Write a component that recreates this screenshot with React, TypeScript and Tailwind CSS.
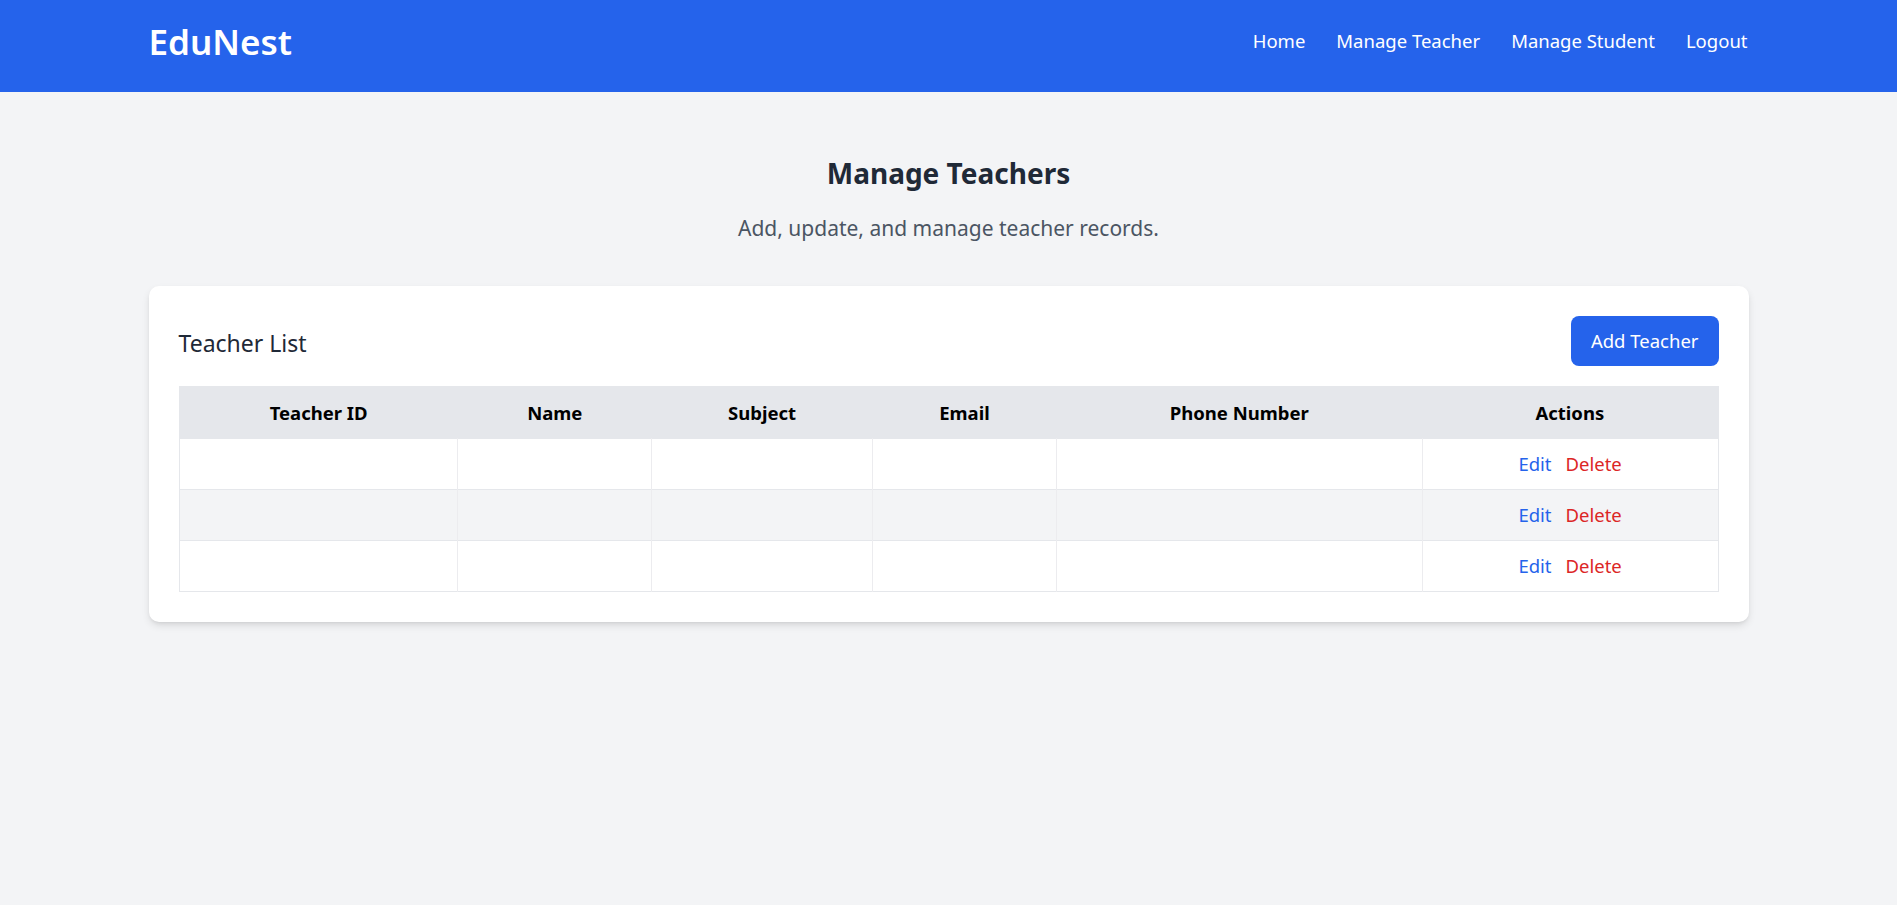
import React from "react";

const columns = [
  { label: "Teacher ID", w: "w-[279px]" },
  { label: "Name", w: "w-[194px]" },
  { label: "Subject", w: "w-[221px]" },
  { label: "Email", w: "w-[184px]" },
  { label: "Phone Number", w: "w-[366px]" },
  { label: "Actions", w: "w-[296px]" },
];

const rows = [1, 2, 3];

const App: React.FC = () => {
  return (
    <div className="min-h-screen bg-[#f3f4f6] font-['Noto_Sans',sans-serif]">
      <nav className="bg-[#2563eb]">
        <div className="mx-auto flex h-[92px] w-full max-w-[1600px] items-center justify-between pb-[10px] pr-[1px]">
          <h1 className="text-[35px] leading-[45px] font-semibold text-white">EduNest</h1>
          <ul className="flex items-center gap-[31px] text-[18.5px] text-white">
            <li><a href="#">Home</a></li>
            <li><a href="#">Manage Teacher</a></li>
            <li><a href="#">Manage Student</a></li>
            <li><a href="#">Logout</a></li>
          </ul>
        </div>
      </nav>

      <main className="mx-auto w-full max-w-[1600px] pt-[61px]">
        <div className="text-center">
          <h2 className="text-[28px] leading-[40px] font-bold text-[#1f2937]">Manage Teachers</h2>
          <p className="mt-[18px] text-[21px] leading-[35px] text-[#4b5563]">
            Add, update, and manage teacher records.
          </p>
        </div>

        <div className="mt-[40px] rounded-[10px] bg-white p-[30px] shadow-[0_4px_8px_-1px_rgba(0,0,0,0.12),0_2px_4px_-2px_rgba(0,0,0,0.1)]">
          <div className="mb-[20px] flex items-center justify-between">
            <h3 className="pt-[4px] text-[23px] leading-[32px] text-[#1f2937]">Teacher List</h3>
            <button className="h-[50px] rounded-[8px] bg-[#2563eb] px-[20px] text-[18.5px] text-white">
              Add Teacher
            </button>
          </div>

          <table className="w-full border-collapse border border-[#e5e7eb]">
            <thead>
              <tr className="bg-[#e5e7eb]">
                {columns.map((c) => (
                  <th key={c.label} className={`${c.w} h-[52px] text-center text-[18.5px] font-bold text-black`}>
                    {c.label}
                  </th>
                ))}
              </tr>
            </thead>
            <tbody>
              {rows.map((r) => (
                <tr key={r} className={`border-t border-[#e5e7eb] ${r === 2 ? "bg-[#f3f4f6]" : "bg-white"}`}>
                  <td className="h-[51px] border-r border-[#ececef]"></td>
                  <td className="h-[51px] border-r border-[#ececef]"></td>
                  <td className="h-[51px] border-r border-[#ececef]"></td>
                  <td className="h-[51px] border-r border-[#ececef]"></td>
                  <td className="h-[51px] border-r border-[#ececef]"></td>
                  <td className="h-[51px] text-center text-[18.5px]">
                    <button className="mr-[14px] text-[#2563eb]">Edit</button>
                    <button className="text-[#dc2626]">Delete</button>
                  </td>
                </tr>
              ))}
            </tbody>
          </table>
        </div>
      </main>
    </div>
  );
};

export default App;
